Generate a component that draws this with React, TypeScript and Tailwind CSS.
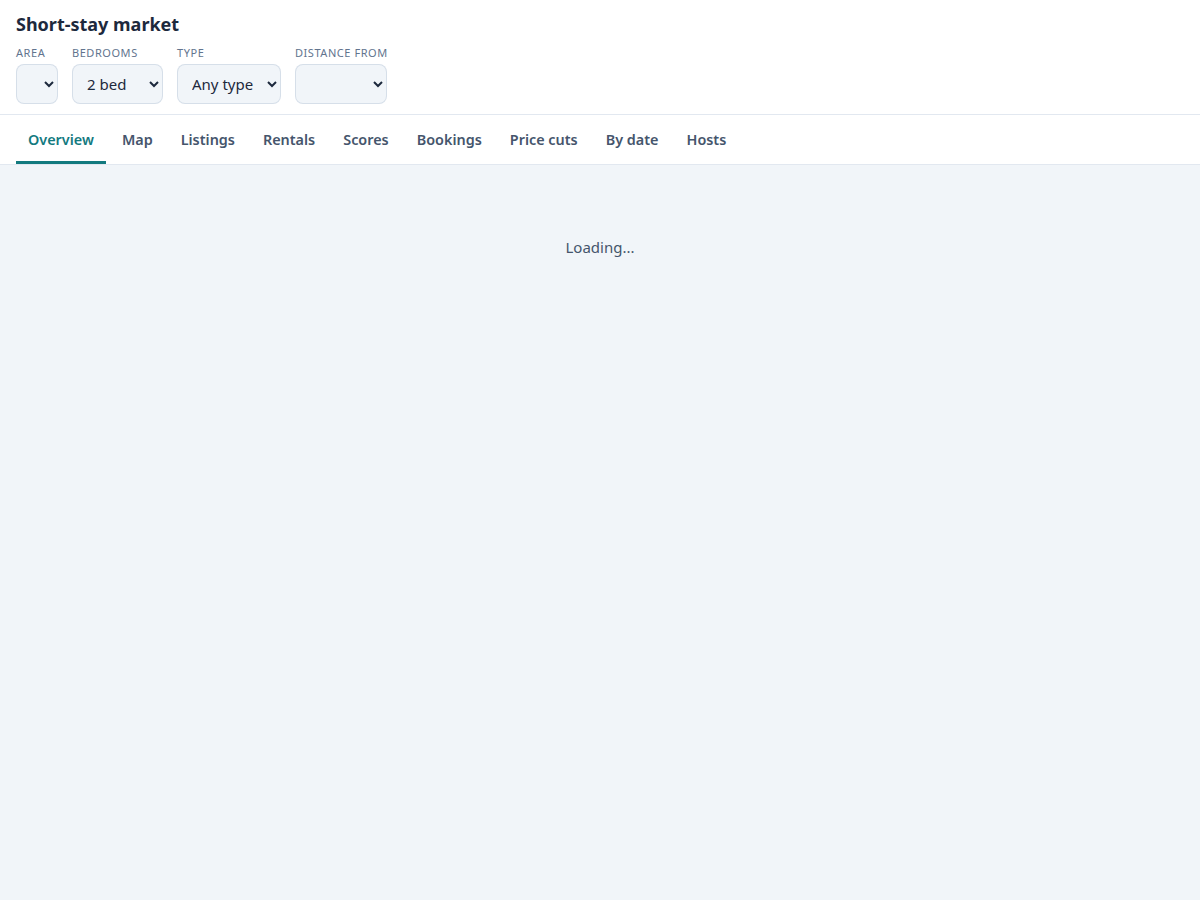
import { useState } from "react";

const TABS = ["Overview", "Map", "Listings", "Rentals", "Scores", "Bookings", "Price cuts", "By date", "Hosts"];

type FilterProps = {
  label: string;
  value: string;
  options: string[];
  width: string;
  onChange: (v: string) => void;
};

function Filter({ label, value, options, width, onChange }: FilterProps) {
  return (
    <label className="flex flex-col gap-1">
      <span className="text-[11px] uppercase tracking-[0.05em] text-slate-500 leading-[14px]">{label}</span>
      <select
        value={value}
        onChange={(e) => onChange(e.target.value)}
        className={`${width} h-10 rounded-lg border border-slate-300/70 bg-slate-100 pl-2.5 pr-1.5 text-[15px] text-slate-800`}
      >
        {options.map((o) => (
          <option key={o} value={o}>
            {o}
          </option>
        ))}
      </select>
    </label>
  );
}

export default function App() {
  const [tab, setTab] = useState("Overview");
  const [area, setArea] = useState("");
  const [beds, setBeds] = useState("2 bed");
  const [type, setType] = useState("Any type");
  const [dist, setDist] = useState("");

  return (
    <div className="min-h-screen bg-slate-100 font-['Noto_Sans',sans-serif] text-slate-900">
      <header className="bg-white border-b border-slate-200 px-4 pt-3 pb-2.5">
        <h1 className="text-[18px] font-bold leading-6 text-slate-800">Short-stay market</h1>
        <div className="mt-2.5 flex gap-3.5">
          <Filter label="Area" value={area} options={[""]} width="w-[42px]" onChange={setArea} />
          <Filter label="Bedrooms" value={beds} options={["1 bed", "2 bed", "3 bed"]} width="w-[91px]" onChange={setBeds} />
          <Filter label="Type" value={type} options={["Any type", "Entire", "Room"]} width="w-[104px]" onChange={setType} />
          <Filter label="Distance from" value={dist} options={[""]} width="w-[92px]" onChange={setDist} />
        </div>
      </header>

      <nav className="bg-white border-b border-slate-200 px-4 flex gap-1">
        {TABS.map((t) => {
          const active = t === tab;
          return (
            <button
              key={t}
              onClick={() => setTab(t)}
              className={`px-3 pt-[14px] pb-[11px] text-[14.4px] font-semibold leading-[21px] border-b-[3px] ${
                active ? "border-[#137a7f] text-[#137a7f]" : "border-transparent text-slate-600"
              }`}
            >
              {t}
            </button>
          );
        })}
      </nav>

      <main className="px-4 pt-[71px] text-center text-[15px] text-slate-600">Loading...</main>
    </div>
  );
}
